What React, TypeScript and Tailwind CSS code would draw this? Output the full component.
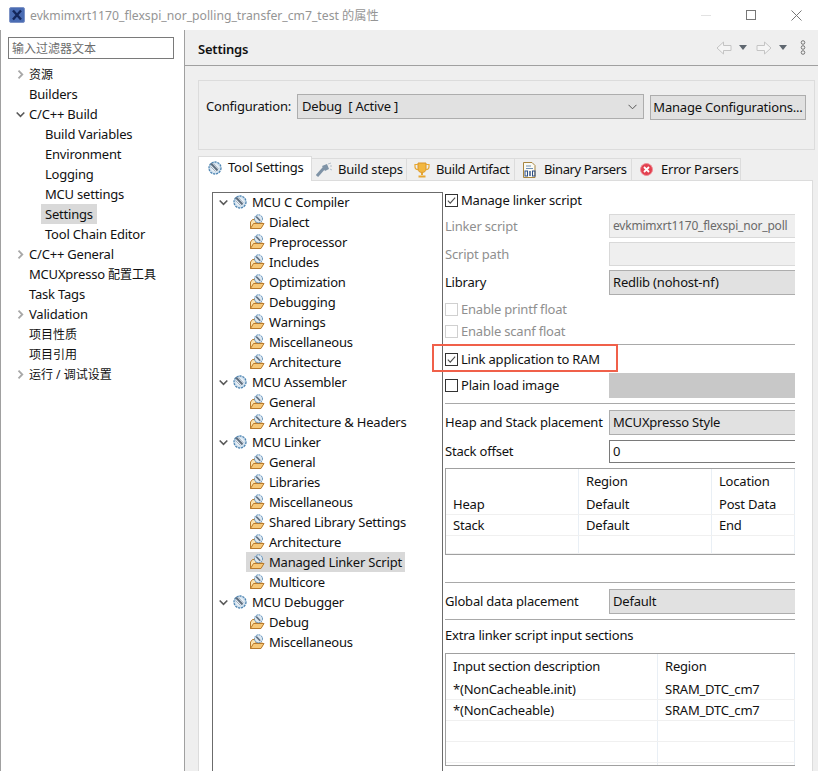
import React from 'react'

const ToolIcon = ({ className = '' }: { className?: string }) => (
  <svg viewBox="0 0 14 14" className={className} fill="none">
    <circle cx="7" cy="7" r="6" fill="#d3e2ef" stroke="#4f86b3" strokeWidth="1.3" strokeDasharray="2.2 0.8" />
    <circle cx="7" cy="7" r="3.8" fill="#eaf1f7" />
    <path d="M3 2.5 L9.5 9.5" stroke="#5f6f80" strokeWidth="2" />
    <path d="M5.5 2.5 L10.5 8" stroke="#a5b2bf" strokeWidth="1" />
    <path d="M2.5 5.5 L7.5 10.5" stroke="#a5b2bf" strokeWidth="1" />
  </svg>
)

const FolderIcon = () => (
  <svg viewBox="0 0 16 16" className="w-4 h-4 shrink-0" fill="none">
    <path d="M1.5 14.5 V8 L3.5 5.5 H7 V9 H13 L14 9.5 L11.5 14.5 Z" fill="#fbe3b0" stroke="#b87a2c" strokeWidth="1" />
    <path d="M1.5 14.5 L4.5 9.5 H15 L12 14.5 Z" fill="#f7c878" stroke="#b87a2c" strokeWidth="1" />
    <circle cx="9.5" cy="4.8" r="4" fill="#dfe9f2" stroke="#4f86b3" strokeWidth="1" strokeDasharray="1.6 0.7" />
    <path d="M7.2 2.6 L11.2 6.8" stroke="#5f6f80" strokeWidth="1.6" />
  </svg>
)

const Chevron = ({ open, dark }: { open?: boolean; dark?: boolean }) => (
  <svg viewBox="0 0 9 9" className="w-[9px] h-[9px]" fill="none">
    {open ? (
      <path d="M0.7 2.5 L4.5 6.3 L8.3 2.5" stroke="#595959" strokeWidth="1.6" />
    ) : (
      <path d="M2.5 0.7 L6.3 4.5 L2.5 8.3" stroke={dark ? '#595959' : '#a8a8a8'} strokeWidth="1.8" />
    )}
  </svg>
)

const Check = () => (
  <svg viewBox="0 0 13 13" className="w-full h-full" fill="none">
    <path d="M2.2 6.6 L5 9.6 L10.8 3" stroke="#4d4d4d" strokeWidth="1.3" />
  </svg>
)

const Checkbox = ({ checked, disabled }: { checked?: boolean; disabled?: boolean }) => (
  <span className={`w-[13px] h-[13px] shrink-0 border bg-white ${disabled ? 'border-[#d0d0d0]' : 'border-[#333333]'}`}>
    {checked && <Check />}
  </span>
)

const Cjk = ({ children }: { children: React.ReactNode }) => <span className="text-[12px] tracking-normal">{children}</span>

const leftTree: { key: string; label: React.ReactNode; arrow?: string; child?: boolean; selected?: boolean }[] = [
  { key: 'res', label: <Cjk>资源</Cjk>, arrow: 'closed' },
  { key: 'builders', label: 'Builders' },
  { key: 'build', label: 'C/C++ Build', arrow: 'open' },
  { key: 'vars', label: 'Build Variables', child: true },
  { key: 'env', label: 'Environment', child: true },
  { key: 'log', label: 'Logging', child: true },
  { key: 'mcu', label: 'MCU settings', child: true },
  { key: 'settings', label: 'Settings', child: true, selected: true },
  { key: 'chain', label: 'Tool Chain Editor', child: true },
  { key: 'general', label: 'C/C++ General', arrow: 'closed' },
  { key: 'config', label: <>MCUXpresso <Cjk>配置工具</Cjk></> },
  { key: 'tasks', label: 'Task Tags' },
  { key: 'validation', label: 'Validation', arrow: 'closed' },
  { key: 'nature', label: <Cjk>项目性质</Cjk> },
  { key: 'refs', label: <Cjk>项目引用</Cjk> },
  { key: 'run', label: <Cjk>运行 / 调试设置</Cjk>, arrow: 'closed' },
]

const toolTree = [
  { name: 'MCU C Compiler', items: ['Dialect', 'Preprocessor', 'Includes', 'Optimization', 'Debugging', 'Warnings', 'Miscellaneous', 'Architecture'] },
  { name: 'MCU Assembler', items: ['General', 'Architecture & Headers'] },
  { name: 'MCU Linker', items: ['General', 'Libraries', 'Miscellaneous', 'Shared Library Settings', 'Architecture', 'Managed Linker Script', 'Multicore'] },
  { name: 'MCU Debugger', items: ['Debug', 'Miscellaneous'] },
]

const Select = ({ children, className = '' }: { children: React.ReactNode; className?: string }) => (
  <div className={`flex-1 h-[25px] pl-[3px] flex items-center bg-[#e1e1e1] border border-[#adadad] border-r-0 ${className}`}>
    {children}
  </div>
)

const Field = ({ label, muted, className = '', children }: { label: string; muted?: boolean; className?: string; children: React.ReactNode }) => (
  <div className={`flex items-center ${className}`}>
    <span className={`w-[164px] shrink-0 whitespace-nowrap ${muted ? 'text-[#8f8f8f]' : ''}`}>{label}</span>
    {children}
  </div>
)

const Separator = ({ className = '' }: { className?: string }) => <div className={`h-px bg-[#a9a9a9] ${className}`} />

const GridTable = ({ columns, rows, rowHeights, className = '' }: { columns: string; rows: string[][]; rowHeights: number[]; className?: string }) => (
  <div className={`border border-r-0 border-[#a0a0a0] overflow-hidden ${className}`}>
    {rows.map((row, i) => (
      <div
        key={i}
        className={`grid items-stretch ${columns} ${i > 0 ? 'border-b border-[#f0f0f0]' : ''}`}
        style={{ height: rowHeights[i] }}
      >
        {row.map((cell, j) => (
          <div key={j} className="pl-[7px] flex items-center border-r border-[#e9eff5] whitespace-nowrap">
            {cell}
          </div>
        ))}
      </div>
    ))}
  </div>
)

export default function App() {
  return (
    <div className="relative w-[818px] h-[771px] overflow-hidden bg-white text-[13px] tracking-[-0.2px] leading-none text-[#111111] font-['Noto_Sans','Noto_Sans_CJK_SC',sans-serif]">
      {/* Title bar */}
      <div className="h-[30px] flex items-center pl-[9px]">
        <svg viewBox="0 0 16 16" className="w-4 h-4 shrink-0">
          <rect x="0.5" y="0.5" width="15" height="15" rx="1.5" fill="#4a6cb3" stroke="#7d93c6" />
          <path d="M4 3.5 L12 12.5 M12 3.5 L4 12.5" stroke="#14275c" strokeWidth="2.4" />
        </svg>
        <span className="ml-[5px] pt-[2px] text-[12.2px] tracking-normal text-[#959595] whitespace-nowrap">evkmimxrt1170_flexspi_nor_polling_transfer_cm7_test 的属性</span>
        <div className="ml-auto flex items-center">
          <div className="w-[10px] h-px bg-[#e2e2e2] mr-[35px]" />
          <div className="w-[10px] h-[10px] border border-[#777777] mr-[35px]" />
          <svg viewBox="0 0 11 11" className="w-[11px] h-[11px] mr-[16px]" fill="none">
            <path d="M0.5 0.5 L10.5 10.5 M10.5 0.5 L0.5 10.5" stroke="#777777" strokeWidth="1" />
          </svg>
        </div>
      </div>

      <div className="flex h-[741px]">
        {/* Left property tree */}
        <aside className="w-[185px] shrink-0 border-l border-r border-[#a0a0a0] bg-white">
          <div className="mt-[7px] ml-[7px] w-[166px] h-[22px] border border-[#7a7a7a] flex items-center pl-[3px] pt-[2px] text-[#6d6d6d]">
            <Cjk>输入过滤器文本</Cjk>
          </div>
          <div className="mt-[5px]">
            {leftTree.map((row) => (
              <div key={row.key} className={`h-5 flex items-center whitespace-pre ${row.child ? 'pl-[44px]' : 'pl-[28px]'} relative`}>
                {row.arrow && (
                  <span className="absolute left-[15px] top-[6px] flex">
                    <Chevron open={row.arrow === 'open'} />
                  </span>
                )}
                {row.selected ? <span className="h-5 flex items-center bg-[#d9d9d9] -ml-1 pl-1 pr-[4px]">{row.label}</span> : <span>{row.label}</span>}
              </div>
            ))}
          </div>
        </aside>

        {/* Settings page */}
        <main className="flex-1 min-w-0 bg-[#efefef]">
          <header className="h-[36px] border-b border-[#a0a0a0] flex items-center pl-[13px]">
            <span className="font-semibold pt-[3px]">Settings</span>
            <div className="ml-auto mr-[12px] flex items-center">
              <svg viewBox="0 0 16 14" className="w-4 h-[14px]" fill="none">
                <path d="M1 7 L7.5 1 V4.5 H15 V9.5 H7.5 V13 Z" fill="#f5f5f5" stroke="#c4c4c4" />
              </svg>
              <span className="ml-[7px] w-0 h-0 border-x-[4px] border-x-transparent border-t-[5px] border-t-[#5f6770]" />
              <svg viewBox="0 0 16 14" className="w-4 h-[14px] ml-[9px]" fill="none">
                <path d="M15 7 L8.5 1 V4.5 H1 V9.5 H8.5 V13 Z" fill="#f5f5f5" stroke="#c4c4c4" />
              </svg>
              <span className="ml-[7px] w-0 h-0 border-x-[4px] border-x-transparent border-t-[5px] border-t-[#5f6770]" />
              <svg viewBox="0 0 6 15" className="w-[6px] h-[15px] ml-[13px]" fill="none">
                <circle cx="3" cy="2.5" r="1.8" stroke="#777777" />
                <circle cx="3" cy="7.5" r="1.8" stroke="#777777" />
                <circle cx="3" cy="12.5" r="1.8" stroke="#777777" />
              </svg>
            </div>
          </header>

          <div className="pl-[13px] pr-[3px] pt-[14px]">
            {/* Configuration */}
            <div className="h-[70px] border border-[#dcdcdc] pl-[7px] pt-[13px] flex items-start">
              <span className="w-[91px] h-6 flex items-center whitespace-nowrap">Configuration:</span>
              <div className="w-[347px] h-[25px] pl-[4px] pr-[6px] flex items-center justify-between bg-[#e1e1e1] border border-[#adadad]">
                <span className="whitespace-pre">Debug  [ Active ]</span>
                <svg viewBox="0 0 9 6" className="w-[9px] h-[6px]" fill="none">
                  <path d="M0.5 0.8 L4.5 4.8 L8.5 0.8" stroke="#555555" />
                </svg>
              </div>
              <button className="ml-[6px] mt-px w-[156px] h-[25px] bg-[#e1e1e1] border border-[#adadad] whitespace-nowrap">Manage Configurations...</button>
            </div>

            {/* Tabs */}
            <div className="mt-[6px] h-[25px] flex items-end relative z-10 -mb-px whitespace-nowrap">
              <div className="w-[114px] h-[25px] bg-white border border-b-0 border-[#dcdcdc] flex items-center pl-[9px] pb-[3px]">
                <ToolIcon className="w-[14px] h-[14px]" />
                <span className="ml-[6px]">Tool Settings</span>
              </div>
              <div className="w-[95px] h-[23px] border-t border-b border-r border-[#dcdcdc] flex items-center pl-[4px]">
                <svg viewBox="0 0 16 16" className="w-4 h-4 shrink-0" fill="none">
                  <path d="M1 14 L8 6" stroke="#7f93a6" strokeWidth="3" />
                  <path d="M6 4 L11 2 L13 7 L9 9 Z" fill="#7f93a6" />
                  <path d="M12 2 L15 1 M14 4 L16 4 M14 7 L16 8" stroke="#b3c0cc" strokeWidth="1" />
                </svg>
                <span className="ml-[6px]">Build steps</span>
              </div>
              <div className="w-[108px] h-[23px] border-t border-b border-r border-[#dcdcdc] flex items-center pl-[7px]">
                <svg viewBox="0 0 16 16" className="w-4 h-4 shrink-0" fill="none">
                  <path d="M4 1 H12 V7 C12 9.5 10 10.5 8 10.5 C6 10.5 4 9.5 4 7 Z" fill="#f3b73f" stroke="#d8952a" />
                  <path d="M4 2.5 H1 V5 C1 6.5 2.5 7.5 4 7.5 M12 2.5 H15 V5 C15 6.5 13.5 7.5 12 7.5" stroke="#e7a733" strokeWidth="1.2" />
                  <path d="M8 10.5 V13 M4.5 14.5 H11.5" stroke="#e7a733" strokeWidth="2" />
                </svg>
                <span className="ml-[6px] tracking-[-0.4px]">Build Artifact</span>
              </div>
              <div className="w-[117px] h-[23px] border-t border-b border-r border-[#dcdcdc] flex items-center pl-[8px]">
                <svg viewBox="0 0 14 16" className="w-[14px] h-4 shrink-0" fill="none">
                  <path d="M0.5 0.5 H9 L12 3.5 V15.5 H0.5 Z" fill="#fbfbf4" stroke="#a8853e" />
                  <path d="M3 4 H8 M3 6.5 H10" stroke="#6f8fb5" />
                  <rect x="2" y="9" width="2.5" height="5" fill="none" stroke="#2d4e87" />
                  <path d="M7 9 V14" stroke="#2d4e87" strokeWidth="1.4" />
                  <rect x="9.5" y="9" width="2.5" height="5" fill="none" stroke="#2d4e87" />
                </svg>
                <span className="ml-[7px] tracking-[-0.4px]">Binary Parsers</span>
              </div>
              <div className="w-[109px] h-[23px] border-t border-b border-r border-[#dcdcdc] flex items-center pl-[8px]">
                <svg viewBox="0 0 13 13" className="w-[13px] h-[13px] shrink-0" fill="none">
                  <circle cx="6.5" cy="6.5" r="6" fill="#e2404f" stroke="#ef8c95" />
                  <path d="M4 4 L9 9 M9 4 L4 9" stroke="#ffffff" strokeWidth="1.8" />
                </svg>
                <span className="ml-[8px]">Error Parsers</span>
              </div>
            </div>

            {/* Tool settings panel */}
            <div className="h-[600px] w-[615px] bg-white border border-b-0 border-[#dcdcdc] pl-[13px] pt-[11px] flex items-stretch">
              <div className="w-[231px] shrink-0 border border-b-0 border-[#6b6b6b]">
                <div className="-mt-px">
                  {toolTree.map((group) => (
                    <div key={group.name}>
                      <div className="h-5 flex items-center pl-[6px] whitespace-nowrap">
                        <Chevron open />
                        <ToolIcon className="w-[14px] h-[14px] ml-[5px]" />
                        <span className="ml-[5px]">{group.name}</span>
                      </div>
                      {group.items.map((item) => {
                        const selected = item === 'Managed Linker Script'
                        return (
                          <div key={group.name + item} className="h-5 flex items-center pl-[33px] whitespace-nowrap">
                            <div className={`h-5 flex items-center pl-[3px] pr-[3px] ${selected ? 'bg-[#d9d9d9]' : ''}`}>
                              <FolderIcon />
                              <span className="ml-[4px]">{item}</span>
                            </div>
                          </div>
                        )
                      })}
                    </div>
                  ))}
                </div>
              </div>

              {/* Managed linker script form */}
              <div className="ml-[2px] w-[350px] shrink-0 overflow-hidden">
                <div className="h-4 flex items-center gap-[3px] whitespace-nowrap">
                  <Checkbox checked />
                  Manage linker script
                </div>
                <Field label="Linker script" muted className="mt-[6px] h-6">
                  <div className="flex-1 h-6 pl-[3px] flex items-center bg-[#efefef] border border-r-0 border-[#d9d9d9] text-[#6a6a6a] text-[12px] whitespace-nowrap overflow-hidden">
                    evkmimxrt1170_flexspi_nor_poll
                  </div>
                </Field>
                <Field label="Script path" muted className="mt-[4px] h-6">
                  <div className="flex-1 h-6 bg-[#efefef] border border-r-0 border-[#d9d9d9]" />
                </Field>
                <Field label="Library" className="mt-[4px] h-[25px]">
                  <Select>Redlib (nohost-nf)</Select>
                </Field>
                <div className="mt-[6px] h-4 flex items-center gap-[3px] text-[#8f8f8f]">
                  <Checkbox disabled />
                  Enable printf float
                </div>
                <div className="mt-[6px] h-4 flex items-center gap-[3px] text-[#8f8f8f]">
                  <Checkbox disabled />
                  Enable scanf float
                </div>
                <Separator className="mt-[5px]" />
                <div className="mt-[6px] h-4 flex items-center gap-[3px] whitespace-nowrap">
                  <Checkbox checked />
                  Link application to RAM
                </div>
                <div className="mt-[6px] h-[25px] flex items-center">
                  <div className="w-[164px] flex items-center gap-[3px] whitespace-nowrap">
                    <Checkbox />
                    Plain load image
                  </div>
                  <div className="flex-1 h-[25px] bg-[#c8c8c8]" />
                </div>
                <Separator className="mt-[5px]" />
                <Field label="Heap and Stack placement" className="mt-[6px] h-[25px]">
                  <Select>MCUXpresso Style</Select>
                </Field>
                <Field label="Stack offset" className="mt-[5px] h-[23px]">
                  <div className="flex-1 h-[23px] pl-[3px] flex items-center bg-white border border-r-0 border-[#7a7a7a]">0</div>
                </Field>
                <GridTable
                  className="mt-[5px] h-[87px]"
                  columns="grid-cols-[133px_133px_1fr]"
                  rowHeights={[25, 21, 21, 18]}
                  rows={[
                    ['', 'Region', 'Location'],
                    ['Heap', 'Default', 'Post Data'],
                    ['Stack', 'Default', 'End'],
                    ['', '', ''],
                  ]}
                />
                <Separator className="mt-[27px]" />
                <Field label="Global data placement" className="mt-[6px] h-[25px]">
                  <Select>Default</Select>
                </Field>
                <Separator className="mt-[5px]" />
                <div className="mt-[7px] h-4 flex items-center whitespace-nowrap">Extra linker script input sections</div>
                <GridTable
                  className="mt-[10px] h-[113px]"
                  columns="grid-cols-[212px_1fr]"
                  rowHeights={[25, 21, 21, 21, 21, 3]}
                  rows={[
                    ['Input section description', 'Region'],
                    ['*(NonCacheable.init)', 'SRAM_DTC_cm7'],
                    ['*(NonCacheable)', 'SRAM_DTC_cm7'],
                    ['', ''],
                    ['', ''],
                    ['', ''],
                  ]}
                />
              </div>
            </div>
          </div>
        </main>
      </div>

      {/* Highlight drawn over the screenshot */}
      <div className="absolute left-[432px] top-[344px] w-[186px] h-[28px] border-2 border-[#f0604a]" />
    </div>
  )
}
